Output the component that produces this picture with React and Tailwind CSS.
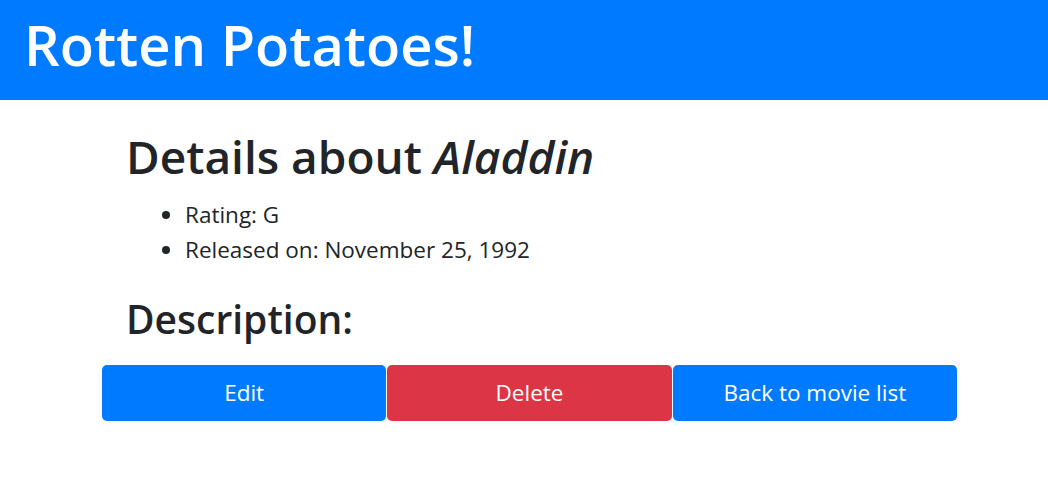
export default function App() {
  return (
    <div className="min-h-[504px] bg-white text-[#212529] font-['Open_Sans',sans-serif]">
      <header className="h-[100px] bg-[#007bff] flex items-center pl-6 pb-3">
        <h1 className="text-[56px] leading-none text-white font-semibold">Rotten Potatoes!</h1>
      </header>
      <main className="w-[855px] ml-[102px] pt-[26px]">
        <div className="pl-6">
          <h2 className="text-[46px] leading-[60px] font-semibold">
            Details about <i>Aladdin</i>
          </h2>
          <ul className="list-disc pl-[59px] mt-[11px] text-[22.5px] leading-[35px]">
            <li>Rating: G</li>
            <li>Released on: November 25, 1992</li>
          </ul>
          <h3 className="text-[39px] leading-[48px] font-semibold mt-[28px]">Description:</h3>
        </div>
        <div className="flex gap-px mt-[22px]">
          <button className="flex-1 h-[56px] rounded-[5px] bg-[#007bff] text-white text-[22.5px]">Edit</button>
          <button className="flex-1 h-[56px] rounded-[5px] bg-[#dc3545] text-white text-[22.5px]">Delete</button>
          <button className="flex-1 h-[56px] rounded-[5px] bg-[#007bff] text-white text-[22.5px]">Back to movie list</button>
        </div>
      </main>
    </div>
  );
}
